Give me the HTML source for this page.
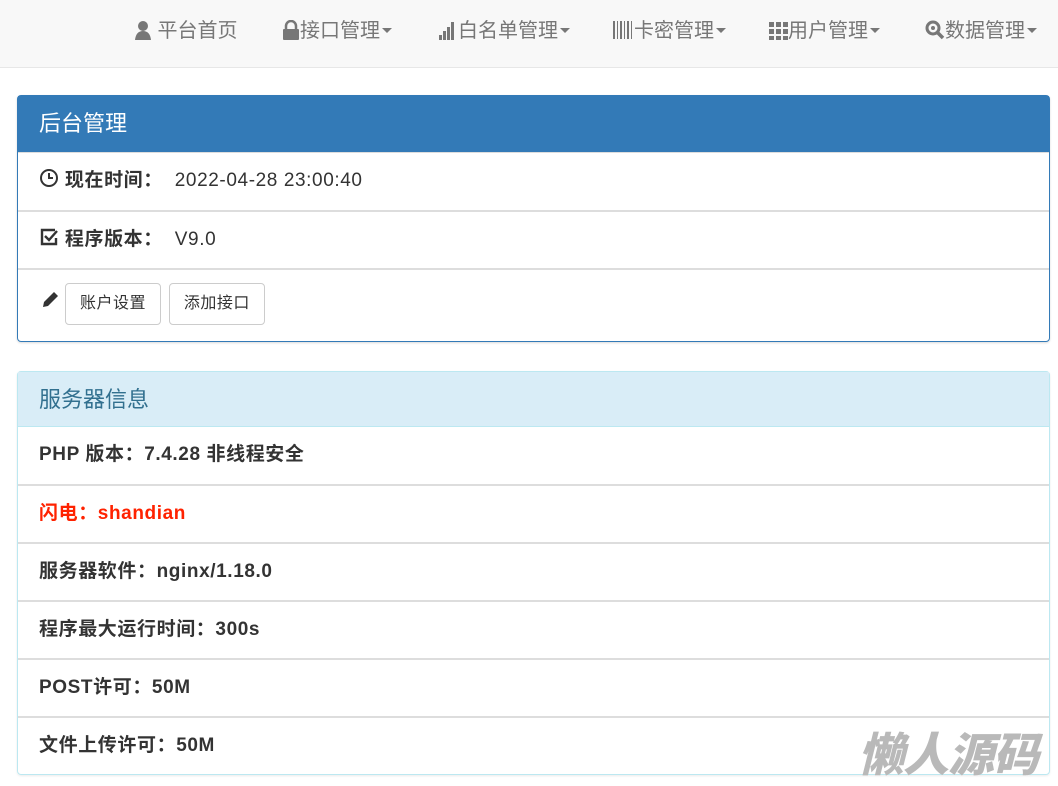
<!DOCTYPE html>
<html><head><meta charset="utf-8"><style>
*{box-sizing:border-box;margin:0;padding:0}
body{width:1058px;height:786px;overflow:hidden;background:#fff;font-family:"Liberation Sans","Noto Sans CJK SC",sans-serif;color:#333;position:relative}
.nav{position:absolute;left:0;top:0;width:1058px;height:68px;background:#f8f8f8;border-bottom:1px solid #e7e7e7}
.ni{position:absolute;top:18px;font-size:20px;color:#777;line-height:26px;white-space:nowrap}
.ni svg{vertical-align:-3px}
.car{display:inline-block;border-left:5px solid transparent;border-right:5px solid transparent;border-top:5px solid #777;vertical-align:4px;margin-left:2px}
.panel{position:absolute;left:17px;width:1033px;border-radius:4px}
.p1{top:95px;height:247px;border:1px solid #337ab7;box-shadow:0 1px 2px rgba(0,0,0,.15)}
.p2{top:371px;height:404px;border:1px solid #bce8f1;box-shadow:0 1px 2px rgba(0,0,0,.08)}
.hd{height:56px;padding-left:21px;font-size:22px;line-height:56px}
.p1 .hd{background:#337ab7;color:#fff}
.p2 .hd{background:#d9edf7;color:#31708f;height:55px;line-height:55px;border-bottom:1px solid #bce8f1}
.row{height:58px;border-top:2px solid #ddd;padding-left:21px;font-size:19px;letter-spacing:0.6px;line-height:56px;font-weight:bold;color:#333}
.row .n{font-weight:normal}
.btn{display:inline-block;height:42px;border:1px solid #ccc;border-radius:4px;padding:0 14px;font-size:16px;letter-spacing:0.5px;line-height:40px;font-weight:normal;color:#333;background:#fff;margin-left:2px}
.wm{position:absolute;left:858px;top:726px;font-size:46px;font-weight:900;font-style:italic;color:#b9b9b9;letter-spacing:-1px;font-family:"WenQuanYi Zen Hei","Noto Sans CJK SC",sans-serif;line-height:52px}
</style></head><body>
<div class="nav">
<div class="ni" style="left:134px"><svg width="18" height="20" viewBox="0 0 18 20"><circle cx="9" cy="6" r="5" fill="#777"/><path d="M1 20 Q2 11 9 11 Q16 11 17 20Z" fill="#777"/></svg> 平台首页</div>
<div class="ni" style="left:282px"><svg width="18" height="20" viewBox="0 0 18 20"><path d="M4 9V6a5 5 0 0 1 10 0v3" stroke="#777" stroke-width="2.5" fill="none"/><rect x="1" y="9" width="16" height="11" rx="1" fill="#777"/></svg>接口管理<span class="car"></span></div>
<div class="ni" style="left:438px"><svg width="20" height="20" viewBox="0 0 20 20" fill="#777"><rect x="1" y="15" width="3" height="5"/><rect x="5" y="11" width="3" height="9"/><rect x="9" y="7" width="3" height="13"/><rect x="13" y="2" width="3" height="18"/></svg>白名单管理<span class="car"></span></div>
<div class="ni" style="left:612px"><svg width="22" height="20" viewBox="0 0 22 20" fill="#777"><rect x="1" y="1" width="2" height="18"/><rect x="5" y="1" width="1" height="18"/><rect x="8" y="1" width="2" height="18"/><rect x="12" y="1" width="1" height="18"/><rect x="15" y="1" width="2" height="18"/><rect x="19" y="1" width="1" height="18"/></svg>卡密管理<span class="car"></span></div>
<div class="ni" style="left:768px"><svg width="20" height="20" viewBox="0 0 20 20" fill="#777"><rect x="1" y="2" width="5" height="5"/><rect x="8" y="2" width="5" height="5"/><rect x="15" y="2" width="5" height="5"/><rect x="1" y="9" width="5" height="5"/><rect x="8" y="9" width="5" height="5"/><rect x="15" y="9" width="5" height="5"/><rect x="1" y="16" width="5" height="4"/><rect x="8" y="16" width="5" height="4"/><rect x="15" y="16" width="5" height="4"/></svg>用户管理<span class="car"></span></div>
<div class="ni" style="left:925px"><svg width="20" height="20" viewBox="0 0 20 20"><circle cx="8" cy="8" r="6" stroke="#777" stroke-width="3" fill="none"/><circle cx="8" cy="8" r="2" fill="#777"/><path d="M12 12l6 6" stroke="#777" stroke-width="3.5"/></svg>数据管理<span class="car"></span></div>
</div>
<div class="panel p1">
<div class="hd">后台管理</div>
<div class="row" style="border-top:1px solid #ddd;height:58px"><svg width="20" height="20" viewBox="0 0 20 20" style="vertical-align:-2px"><circle cx="10" cy="10" r="8" stroke="#333" stroke-width="2" fill="none"/><path d="M10 5v5h4" stroke="#333" stroke-width="2" fill="none"/></svg> 现在时间： <span class="n" style="margin-left:6px">2022-04-28 23:00:40</span></div>
<div class="row"><svg width="20" height="20" viewBox="0 0 20 20" style="vertical-align:-2px"><path d="M16 3H3v14h14v-6" stroke="#333" stroke-width="2.4" fill="none"/><path d="M6 9l4 4 8-9" stroke="#333" stroke-width="2.4" fill="none"/></svg> 程序版本： <span class="n" style="margin-left:6px">V9.0</span></div>
<div class="row" style="height:73px;line-height:normal;padding-top:13px"><svg width="24" height="22" viewBox="0 0 22 22" style="vertical-align:top;margin-top:5px"><path d="M3 19l1-5 10-10 4 4-10 10z" fill="#333"/></svg><span class="btn">账户设置</span> <span class="btn" style="margin-left:2px">添加接口</span></div>
</div>
<div class="panel p2">
<div class="hd">服务器信息</div>
<div class="row" style="border-top:none;height:57px">PHP 版本：7.4.28 非线程安全</div>
<div class="row" style="color:#ff2200">闪电：shandian</div>
<div class="row">服务器软件：nginx/1.18.0</div>
<div class="row">程序最大运行时间：300s</div>
<div class="row">POST许可：50M</div>
<div class="row">文件上传许可：50M</div>
</div>
<div class="wm">懒人源码</div>
</body></html>
